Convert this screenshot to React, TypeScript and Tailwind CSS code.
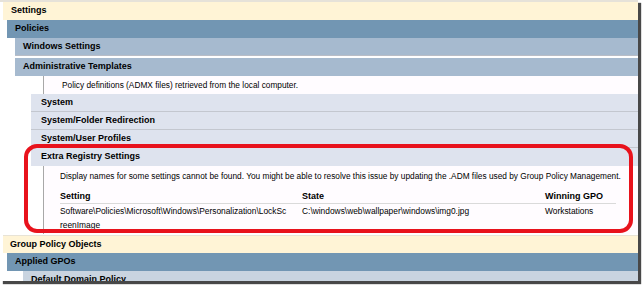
import React from 'react';

const font = { fontFamily: '"Liberation Sans", Arial, sans-serif' };

function Bar({ label, indent, pad, bg, border = '' }: { label: string; indent: string; pad: string; bg: string; border?: string }) {
  return (
    <div className={`${indent} h-[18px] flex items-center ${pad} ${bg} ${border} font-bold text-[9px] text-black whitespace-nowrap`}>
      {label}
    </div>
  );
}

export default function App() {
  return (
    <div className="w-[644px] h-[285px] bg-white overflow-hidden" style={font}>
      <div className="relative w-[638px] h-[281px] bg-white border-t-2 border-[#E6E2D9] shadow-[3px_3px_1px_rgba(40,40,40,0.85)]">
        <div className="h-full overflow-hidden">
          {/* Settings tree */}
          <Bar label="Settings" indent="ml-[3px]" pad="pl-2" bg="bg-[#FFF4D6]" />
          <Bar label="Policies" indent="ml-[7px]" pad="pl-2" bg="bg-[#7296B3]" />
          <Bar label="Windows Settings" indent="ml-[15px]" pad="pl-2" bg="bg-[#A6BACF]" border="border-b border-[#B9BDC6]" />
          <div className="ml-[15px] mt-[2px] h-[18px] flex items-center pl-2 bg-[#A6BACF] font-bold text-[9px]">Administrative Templates</div>
          <div className="ml-[43px] h-[18px] flex items-center pl-[18px] border-l border-[#A8A8A8] bg-[#FFFCFF] text-[8.3px]">
            Policy definitions (ADMX files) retrieved from the local computer.
          </div>

          <Bar label="System" indent="ml-[31px]" pad="pl-[10px]" bg="bg-[#DEE3EE]" border="border-b border-[#C3C7CF]" />
          <Bar label="System/Folder Redirection" indent="ml-[31px]" pad="pl-[10px]" bg="bg-[#DEE3EE]" border="border-b border-[#C3C7CF]" />
          <Bar label="System/User Profiles" indent="ml-[31px]" pad="pl-[10px]" bg="bg-[#DEE3EE]" border="border-b border-[#C3C7CF]" />
          <Bar label="Extra Registry Settings" indent="ml-[31px]" pad="pl-[10px]" bg="bg-[#DEE3EE]" />

          <div className="ml-[43px] h-[68px] border-l border-[#A8A8A8] bg-[#FFFCFF] pl-[16px] pr-2 text-[8.4px]">
            <div className="h-[20px] flex items-center whitespace-nowrap text-[8.3px]">
              Display names for some settings cannot be found. You might be able to resolve this issue by updating the .ADM files used by Group Policy Management.
            </div>
            <div className="mt-[4px] w-[556px] grid grid-cols-[242px_243px_71px] border-b border-[#DADADA] h-[14px] items-center font-bold text-[9px]">
              <span>Setting</span>
              <span>State</span>
              <span>Winning GPO</span>
            </div>
            <div className="w-[556px] grid grid-cols-[242px_243px_71px] leading-[14px]">
              <span>Software\Policies\Microsoft\Windows\Personalization\LockSc<br />reenImage</span>
              <span>C:\windows\web\wallpaper\windows\img0.jpg</span>
              <span>Workstations</span>
            </div>
          </div>

          <div className="ml-[3px] mt-[1px] h-[18px] flex items-center pl-[7px] bg-[#FFF4D6] border-t border-[#E8E3D6] font-bold text-[9px]">Group Policy Objects</div>
          <Bar label="Applied GPOs" indent="ml-[7px]" pad="pl-2" bg="bg-[#7296B3]" />
          <Bar label="Default Domain Policy" indent="ml-[23px]" pad="pl-2" bg="bg-[#C9D4E0]" />
        </div>

        {/* highlight */}
        <div className="absolute left-[24px] top-[142px] w-[609px] h-[89px] rounded-[13px] border-4 border-[#E8121C] pointer-events-none" />
      </div>
    </div>
  );
}
